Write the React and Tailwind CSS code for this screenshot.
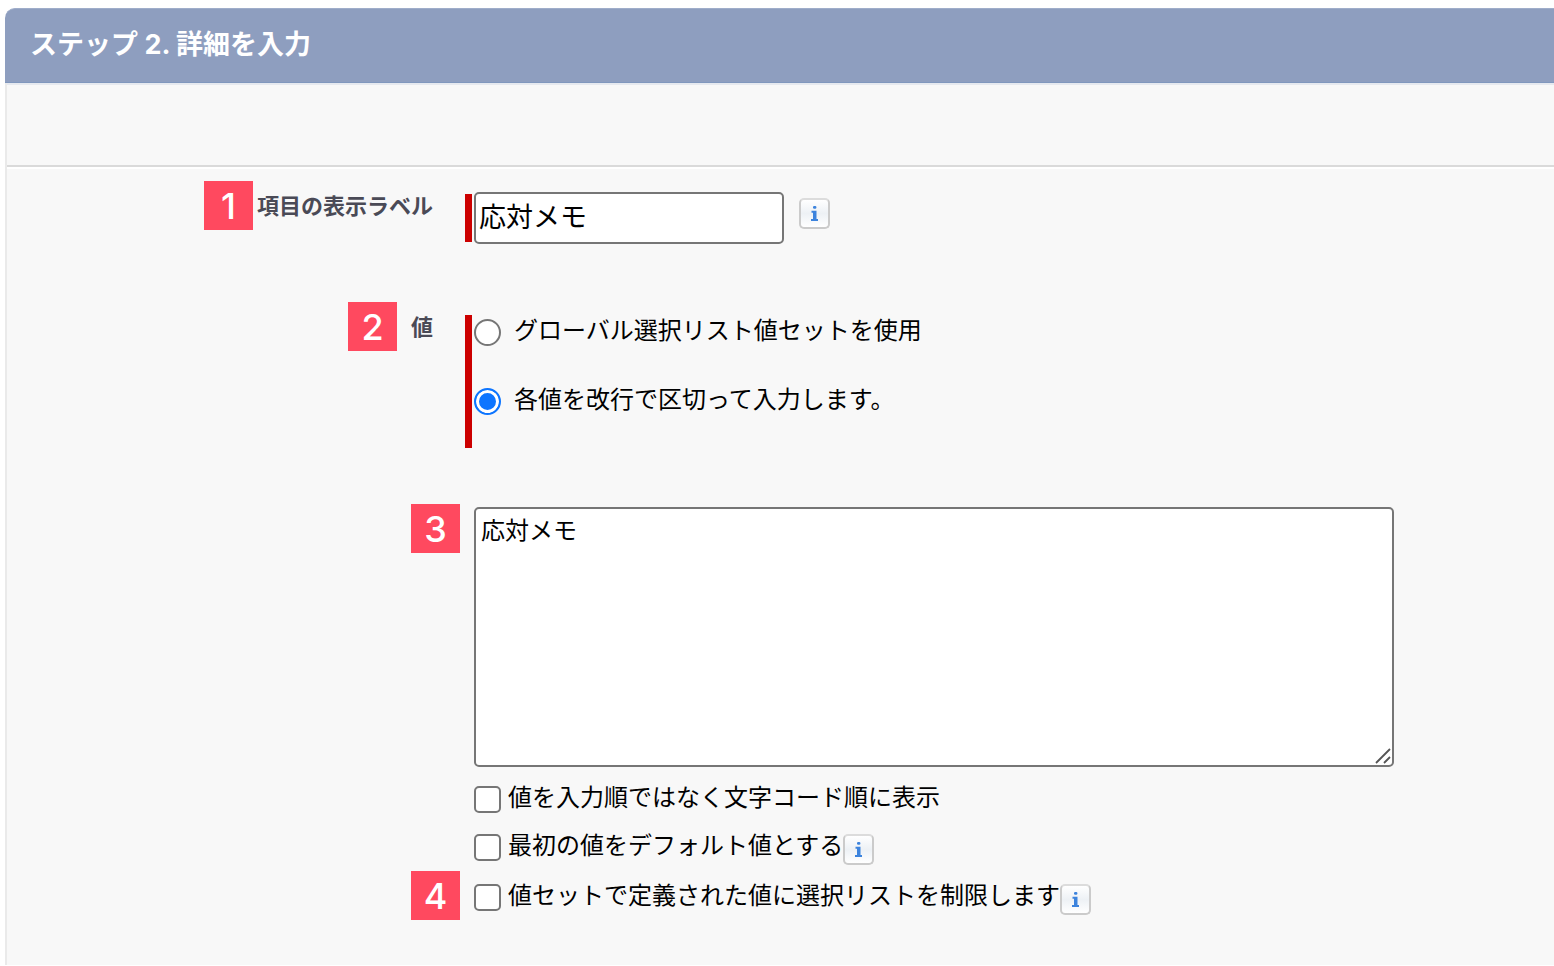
// App.jsx - Custom field wizard, step 2
import React, { useState } from 'react';

const RADIO_OPTIONS = [
  { id: 'global', label: 'グローバル選択リスト値セットを使用' },
  { id: 'manual', label: '各値を改行で区切って入力します。' },
];

// Numbered marker next to a form row
function StepBadge({ number }) {
  return (
    <span className="flex h-[49px] w-[49px] shrink-0 items-center justify-center bg-[#ff495f] pt-px font-[Inter,sans-serif] text-[36px] leading-none font-medium text-white">
      {number}
    </span>
  );
}

function InfoButton({ className = '' }) {
  return (
    <button
      type="button"
      aria-label="情報"
      className={`flex h-[31px] w-[31px] shrink-0 items-center justify-center rounded-[5px] border-2 border-[#cbcbcb] border-t-[#dcdcdc] bg-linear-to-b from-white via-[#edf1f5] to-white ${className}`}
    >
      <svg width="7" height="15" viewBox="0 0 7 15" fill="#3c83dd" aria-hidden="true">
        <rect x="2" y="0" width="3.400" height="2.800" rx="1.200" />
        <path d="M.5 4.800h5v8.200H7V15H0v-2h2V6.800H.5z" />
      </svg>
    </button>
  );
}

// One line of the form: label column on the left, control on the right
function FormRow({ label, children, className = '' }) {
  return (
    <div className={`grid grid-cols-[458px_minmax(0,1fr)] items-start ${className}`}>
      <div className="flex justify-end">{label}</div>
      <div>{children}</div>
    </div>
  );
}

function CheckRow({ id, label, className = 'h-12', children }) {
  const [checked, setChecked] = useState(false);

  return (
    <div className={`flex items-center pl-[9px] ${className}`}>
      <input
        id={id}
        type="checkbox"
        checked={checked}
        onChange={(e) => setChecked(e.target.checked)}
        className="h-[27px] w-[27px] shrink-0 appearance-none rounded-[5px] border-2 border-[#767676] bg-white checked:border-[#0d75ff] checked:bg-[#0d75ff]"
      />
      <label htmlFor={id} className="pb-0.5 pl-[7px] text-[24px] leading-8 whitespace-nowrap">
        {label}
      </label>
      {children}
    </div>
  );
}

export default function App() {
  const [fieldLabel, setFieldLabel] = useState('応対メモ');
  const [source, setSource] = useState('manual');
  const [values, setValues] = useState('応対メモ');

  return (
    <main className="flex min-h-screen flex-col bg-white pt-2 pb-px pl-[5px] font-['Liberation_Sans','Noto_Sans_CJK_JP',sans-serif] text-black">
      {/* Header */}
      <header className="rounded-tl-[10px] border-t border-b border-t-[#9fadca] border-b-[#8097bd] bg-[#8e9ebf] px-[25px] pt-[18px] pb-[19px]">
        <h1 className="font-[Inter,'Noto_Sans_CJK_JP',sans-serif] text-[27px] leading-9 font-bold text-white">
          ステップ 2. 詳細を入力
        </h1>
      </header>

      <section className="flex-1 border-l-2 border-[#eaeaea] bg-[#f8f8f8]">
        <div className="h-[84px] border-t-2 border-b-2 border-t-[#e6e9ef] border-b-[#dadada]" />

        <form className="border-t-2 border-white pt-3" onSubmit={(e) => e.preventDefault()}>
          {/* Field label */}
          <FormRow
            className="mb-[58px]"
            label={
              <div className="flex items-center gap-1 pr-8">
                <StepBadge number={1} />
                <label htmlFor="field-label" className="pt-0.5 text-[22px] leading-8 font-bold text-[#4a4a56]">
                  項目の表示ラベル
                </label>
              </div>
            }
          >
            <div className="flex items-start pt-[11px]">
              <span className="mt-0.5 mr-0.5 h-12 w-[7px] shrink-0 bg-[#c00]" />
              <input
                id="field-label"
                type="text"
                value={fieldLabel}
                onChange={(e) => setFieldLabel(e.target.value)}
                className="h-[52px] w-[310px] rounded-[5px] border-2 border-[#767676] bg-white px-[3px] pb-1.5 text-[27px]"
              />
              <InfoButton className="mt-1.5 ml-[15px]" />
            </div>
          </FormRow>

          {/* Value source */}
          <FormRow
            className="mb-14"
            label={
              <div className="flex items-center gap-3.5 pr-8">
                <StepBadge number={2} />
                <span id="value-label" className="pt-0.5 text-[22px] leading-8 font-bold text-[#4a4a56]">
                  値
                </span>
              </div>
            }
          >
            <div className="flex pt-[13px]">
              <span className="mr-0.5 w-[7px] shrink-0 bg-[#c00]" />
              <div role="radiogroup" aria-labelledby="value-label" className="flex h-[133px] flex-col gap-[37px] pt-px">
                {RADIO_OPTIONS.map((option) => (
                  <div key={option.id} className="flex h-8 items-center">
                    <input
                      id={option.id}
                      type="radio"
                      name="source"
                      checked={source === option.id}
                      onChange={() => setSource(option.id)}
                      className="h-[27px] w-[27px] shrink-0 appearance-none rounded-full border-2 border-[#767676] bg-white checked:border-[#0d75ff] checked:bg-[#0d75ff] checked:shadow-[inset_0_0_0_3px_#fff]"
                    />
                    <label htmlFor={option.id} className="pb-0.5 pl-[13px] text-[24px] leading-8 whitespace-nowrap">
                      {option.label}
                    </label>
                  </div>
                ))}
              </div>
            </div>
          </FormRow>

          {/* Picklist values */}
          <FormRow
            label={
              <div className="pr-[5px]">
                <StepBadge number={3} />
              </div>
            }
          >
            <div className="pt-[3px] pr-8 pl-[9px]">
              <div className="relative max-w-[920px]">
                <textarea
                  aria-label="値"
                  value={values}
                  onChange={(e) => setValues(e.target.value)}
                  className="block h-[260px] w-full resize-none rounded-[5px] border-2 border-[#767676] bg-white px-[5px] py-1 text-[24px] leading-9"
                />
                <svg
                  className="pointer-events-none absolute right-[3px] bottom-[3px]"
                  width="16"
                  height="16"
                  viewBox="0 0 16 16"
                  stroke="#555"
                  strokeWidth="1.8"
                  aria-hidden="true"
                >
                  <path d="M1 15L15 1M9 15L15 9" />
                </svg>
              </div>
            </div>
          </FormRow>

          {/* Options */}
          <FormRow className="pt-2">
            <CheckRow id="sort-values" label="値を入力順ではなく文字コード順に表示" />
            <CheckRow id="first-default" label="最初の値をデフォルト値とする">
              <InfoButton className="mt-1" />
            </CheckRow>
          </FormRow>
          <FormRow
            label={
              <div className="pr-[5px]">
                <StepBadge number={4} />
              </div>
            }
          >
            <CheckRow id="restrict" className="h-[52px]" label="値セットで定義された値に選択リストを制限します">
              <InfoButton className="mt-1" />
            </CheckRow>
          </FormRow>
        </form>
      </section>
    </main>
  );
}
